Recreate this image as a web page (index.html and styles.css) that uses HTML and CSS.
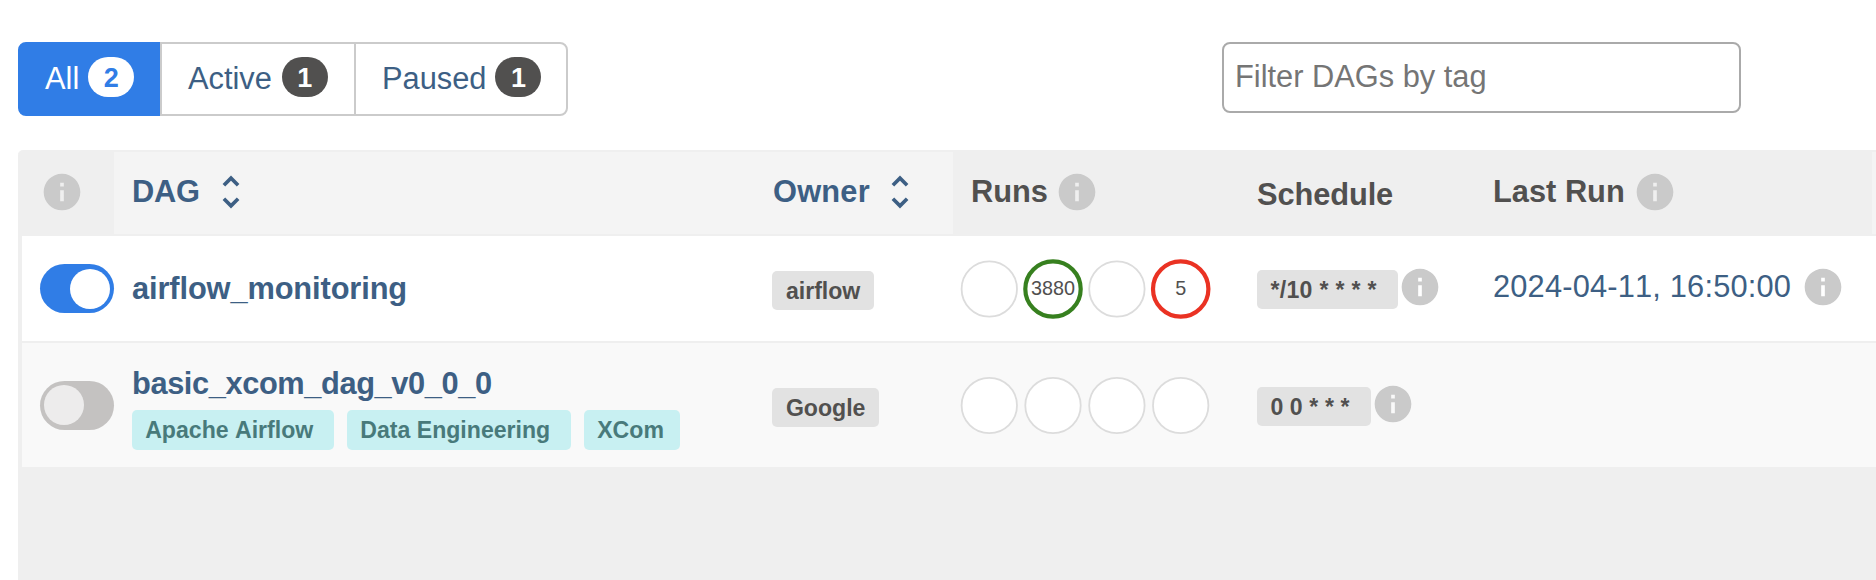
FILE: index.html
```html
<!DOCTYPE html>
<html lang="en">
<head>
<meta charset="utf-8">
<title>DAGs</title>
<link rel="stylesheet" href="styles.css">
</head>
<body>
<svg class="defs" width="0" height="0">
  <symbol id="info" viewBox="0 0 24 24"><path d="M12 2C6.48 2 2 6.48 2 12s4.48 10 10 10 10-4.48 10-10S17.52 2 12 2zm1 15h-2v-6h2v6zm0-8h-2V7h2v2z"/></symbol>
  <symbol id="sort" viewBox="0 0 24 24"><path d="M12 5.83L15.17 9l1.41-1.41L12 3 7.41 7.59 8.83 9 12 5.83zm0 12.34L8.83 15l-1.41 1.41L12 21l4.59-4.59L15.17 15 12 18.17z"/></symbol>
</svg>
<header class="toolbar">
  <nav class="filters">
    <a class="filter filter-active">All<span class="badge">2</span></a>
    <a class="filter filter-mid">Active<span class="badge">1</span></a>
    <a class="filter filter-last">Paused<span class="badge">1</span></a>
  </nav>
  <input class="tag-input" type="text" placeholder="Filter DAGs by tag">
</header>
<main class="table">
  <div class="row head">
    <div class="cell cell-info"><svg class="icon"><use href="#info"/></svg></div>
    <div class="cell cell-dag sortable">DAG<svg class="icon sort"><use href="#sort"/></svg></div>
    <div class="cell cell-owner-head sortable">Owner<svg class="icon sort"><use href="#sort"/></svg></div>
    <div class="cell cell-runs-head">Runs<svg class="icon head-info"><use href="#info"/></svg></div>
    <div class="cell cell-schedule-head">Schedule</div>
    <div class="cell cell-last-head">Last Run<svg class="icon head-info"><use href="#info"/></svg></div>
    <div class="sortable"></div>
  </div>
  <div class="row dag">
    <div class="cell cell-toggle"><span class="toggle toggle-on"></span></div>
    <div class="cell cell-dag"><a class="name">airflow_monitoring</a></div>
    <div class="cell"><span class="label">airflow</span></div>
    <div class="cell cell-runs">
      <svg class="runs" width="256" height="64" viewBox="0 0 256 64">
        <circle class="run" cx="32.3" cy="32" r="27.7"/>
        <circle class="run success" cx="96" cy="32" r="27.7"/>
        <circle class="run" cx="159.9" cy="32" r="27.7"/>
        <circle class="run failed" cx="223.7" cy="32" r="27.7"/>
        <text class="count" x="96" y="38.2">3880</text>
        <text class="count" x="223.7" y="38.2">5</text>
      </svg>
    </div>
    <div class="cell cell-schedule"><span class="label cron cron-long">*/10 * * * *</span><svg class="icon"><use href="#info"/></svg></div>
    <div class="cell cell-last"><a class="date">2024-04-11, 16:50:00</a><svg class="icon"><use href="#info"/></svg></div>
  </div>
  <div class="row dag dag-tagged">
    <div class="cell cell-toggle"><span class="toggle"></span></div>
    <div class="cell cell-dag cell-tagged">
      <a class="name">basic_xcom_dag_v0_0_0</a>
      <div class="tags"><span class="tag">Apache Airflow&nbsp;</span><span class="tag">Data Engineering&nbsp;</span><span class="tag tag-last">XCom</span></div>
    </div>
    <div class="cell"><span class="label">Google</span></div>
    <div class="cell cell-runs">
      <svg class="runs" width="256" height="64" viewBox="0 0 256 64">
        <circle class="run" cx="32.3" cy="32.5" r="27.7"/>
        <circle class="run" cx="96" cy="32.5" r="27.7"/>
        <circle class="run" cx="159.9" cy="32.5" r="27.7"/>
        <circle class="run" cx="223.7" cy="32.5" r="27.7"/>
      </svg>
    </div>
    <div class="cell cell-schedule"><span class="label cron cron-short">0 0 * * *</span><svg class="icon"><use href="#info"/></svg></div>
    <div class="cell"></div>
  </div>
</main>
</body>
</html>
```
FILE: styles.css
```css
* { box-sizing: border-box; }
body {
  margin: 0;
  height: 580px;
  display: flex;
  flex-direction: column;
  overflow: hidden;
  background: #fff;
  color: #51504f;
  font: 30.8px/44px "Liberation Sans", Arial, sans-serif;
  font-kerning: none;
}
.defs { display: none; }
.toolbar {
  flex: none;
  display: flex;
  justify-content: space-between;
  align-items: flex-start;
  height: 150px;
  padding: 42px 135px 0 18px;
}
.filters { display: flex; height: 74px; }
.filter {
  display: flex;
  align-items: center;
  gap: 9px;
  border: 2px solid #cbcbcb;
  color: #3d5f84;
}
.filter-active {
  width: 142px;
  padding: 0 0 0 25px;
  border-color: #307de6;
  border-radius: 8px 0 0 8px;
  background: #307de6;
  color: #fff;
}
.filter-mid { gap: 10px; width: 196px; padding-left: 26px; }
.filter-last {
  width: 214px;
  margin-left: -2px;
  padding-left: 26px;
  border-radius: 0 8px 8px 0;
}
.badge {
  width: 46px;
  height: 40px;
  margin-top: -4px;
  border-radius: 20px;
  background: #51504f;
  color: #fff;
  font-size: 27px;
  font-weight: bold;
  line-height: 42px;
  text-align: center;
}
.filter-active .badge { background: #fff; color: #307de6; }
.tag-input {
  width: 519px;
  height: 71px;
  padding: 0 0 1px 11px;
  border: 2px solid #aaa;
  border-radius: 8px;
  background: #fff;
  font: inherit;
}
.tag-input::placeholder { color: #757575; }
.table {
  flex: 1;
  margin-left: 18px;
  border-top: 2px solid #efefef;
  border-radius: 5px 0 0 0;
  background: #efefef;
}
.row {
  display: grid;
  grid-template-columns: 96px 642px 197px 288px 237px 394px 4px;
}
.head {
  height: 84px;
  border-bottom: 2px solid #efefef;
  font-weight: bold;
}
.cell { display: flex; align-items: center; padding-left: 16px; }
.cell-dag { padding-left: 18px; }
.sortable { background: #f4f4f4; color: #3d5f84; }
.head .cell { padding-bottom: 2px; }
.head .cell-dag { letter-spacing: -0.3px; }
.cell-info { padding-left: 22px; }
.cell-owner-head { padding-left: 17px; letter-spacing: 0.2px; }
.cell-runs-head { padding-left: 18px; }
.head .cell-schedule-head { padding-bottom: 0; padding-top: 3px; letter-spacing: -0.1px; }
.cell-last-head { padding-left: 15px; }
.icon { flex: none; width: 44px; height: 44px; fill: #cacaca; }
.sort { margin-left: 8px; fill: #3d5f84; }
.head .cell-dag .sort { margin-left: 9px; }
.head-info { margin-left: 7px; }
.cell-last-head .head-info { margin-left: 8px; }
.dag {
  height: 107px;
  margin-left: 4px;
  grid-template-columns: 92px 642px 197px 288px 237px 394px;
  border-bottom: 2px solid #efefef;
  background: #fff;
}
.dag-tagged { height: 126px; background: #f9f9f9; }
.cell-toggle { padding-left: 18px; }
.toggle {
  display: flex;
  align-items: center;
  width: 74px;
  height: 49px;
  padding: 0 4px;
  border-radius: 25px;
  background: #c4c2c1;
}
.toggle::before {
  content: "";
  width: 40px;
  height: 40px;
  border-radius: 50%;
  background: #edecec;
}
.toggle-on { justify-content: flex-end; background: #307de6; }
.toggle-on::before { background: #fff; }
.name { color: #3d5f84; font-weight: bold; letter-spacing: -0.12px; }
.cell-tagged { flex-direction: column; align-items: flex-start; padding-top: 19px; }
.cell-tagged .name { margin-bottom: 4px; letter-spacing: -0.4px; }
.tags { display: flex; gap: 13px; }
.tag, .label {
  height: 39px;
  padding: 0 13.9px;
  border-radius: 5px;
  font-size: 23.1px;
  font-weight: bold;
  line-height: 41px;
  white-space: nowrap;
}
.tag { height: 40px; padding: 0 14.4px 0 13.2px; line-height: 40px; background: #c8f0f2; color: #487a7b; }
.tag-last { width: 96px; }
.label { margin-top: 4px; background: #e2e2e2; }
.cell-runs { padding-left: 4px; }
.run { fill: #fff; stroke: #dcdcdc; stroke-width: 1.8; }
.success { stroke: #37801f; stroke-width: 4.2; }
.failed { stroke: #ea3223; stroke-width: 4.2; }
.count { fill: #51504f; font-size: 19.8px; text-anchor: middle; }
.cron { margin-top: 2px; padding-left: 13.4px; letter-spacing: 0.3px; }
.cron-long { width: 141px; }
.cron-short { width: 114px; letter-spacing: 0.1px; }
.cell-schedule .icon { margin-top: -3px; }
.cell-last { padding-left: 15px; padding-bottom: 3px; }
.date { margin-right: 10px; color: #3d5f84; letter-spacing: 0.18px; }
```
